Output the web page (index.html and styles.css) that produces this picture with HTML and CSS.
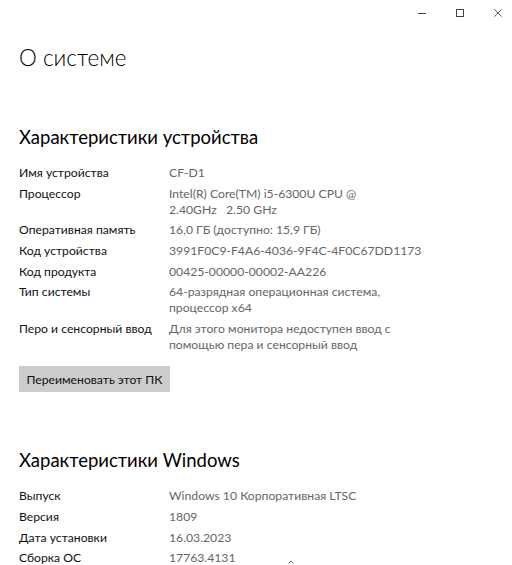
FILE: index.html
```html
<!DOCTYPE html>
<html>
<head>
    <title>О системе</title>
    <link rel="stylesheet" href="styles.css">
</head>
<body>
    <div class="window">
        <div class="titlebar">
            <button class="caption-btn" title="Свернуть">
                <svg width="8" height="8" viewBox="0 0 8 8"><path d="M0 4.5h8" stroke="#444" stroke-width="1"/></svg>
            </button>
            <button class="caption-btn" title="Развернуть">
                <svg width="8" height="8" viewBox="0 0 8 8"><rect x="0.5" y="0.5" width="7" height="7" fill="none" stroke="#444" stroke-width="1"/></svg>
            </button>
            <button class="caption-btn" title="Закрыть">
                <svg width="8" height="8" viewBox="0 0 8 8"><path d="M0.3 0.3l7.4 7.4M7.7 0.3l-7.4 7.4" stroke="#444" stroke-width="0.9"/></svg>
            </button>
        </div>

        <main class="content">
            <h1>О системе</h1>

            <section class="block">
                <h2>Характеристики устройства</h2>
                <div class="specs">
                    <div class="label">Имя устройства</div>
                    <div class="value">CF-D1</div>
                    <div class="label">Процессор</div>
                    <div class="value">Intel(R) Core(TM) i5-6300U CPU @ 2.40GHz&nbsp;&nbsp; 2.50 GHz</div>
                    <div class="label">Оперативная память</div>
                    <div class="value">16,0 ГБ (доступно: 15,9 ГБ)</div>
                    <div class="label">Код устройства</div>
                    <div class="value nowrap">3991F0C9-F4A6-4036-9F4C-4F0C67DD1173</div>
                    <div class="label">Код продукта</div>
                    <div class="value nowrap">00425-00000-00002-AA226</div>
                    <div class="label">Тип системы</div>
                    <div class="value">64-разрядная операционная система, процессор x64</div>
                    <div class="label">Перо и сенсорный ввод</div>
                    <div class="value">Для этого монитора недоступен ввод с помощью пера и сенсорный ввод</div>
                </div>
                <button class="rename-btn">Переименовать этот ПК</button>
            </section>

            <section class="block block-windows">
                <h2>Характеристики Windows</h2>
                <div class="specs">
                    <div class="label">Выпуск</div>
                    <div class="value">Windows 10 Корпоративная LTSC</div>
                    <div class="label">Версия</div>
                    <div class="value">1809</div>
                    <div class="label">Дата установки</div>
                    <div class="value">16.03.2023</div>
                    <div class="label">Сборка ОС</div>
                    <div class="value">17763.4131</div>
                </div>
            </section>
        </main>

        <svg class="scroll-hint" width="6" height="4" viewBox="0 0 6 4"><path d="M0.5 3.5L3 1l2.5 2.5" fill="none" stroke="#777" stroke-width="1"/></svg>
    </div>
</body>
</html>
```

FILE: styles.css
```css
body {
    margin: 0;
    padding: 0;
    background-color: #fff;
    font-family: 'Lato', 'Liberation Sans', sans-serif;
    color: #000;
    overflow: hidden;
}

.window {
    position: relative;
    width: 512px;
    height: 565px;
    overflow: hidden;
}

.titlebar {
    display: flex;
    justify-content: flex-end;
    gap: 10px;
    height: 26px;
}

.caption-btn {
    width: 28px;
    height: 25px;
    padding: 0;
    border: none;
    background: none;
    display: flex;
    align-items: center;
    justify-content: center;
}

.content {
    padding: 0 19px;
}

h1 {
    margin: 17px 0 0;
    font-size: 22.5px;
    font-weight: 300;
    line-height: 30px;
}

h2 {
    margin: 0 0 16px;
    font-size: 18.5px;
    font-weight: 400;
    line-height: 24px;
}

.block {
    margin-top: 52px;
}

.block-windows {
    margin-top: 56px;
}

.specs {
    display: grid;
    grid-template-columns: 150px 222px;
    row-gap: 4.7px;
    font-size: 12.2px;
    line-height: 16px;
}

.label {
    color: #111;
}

.value {
    color: #666;
}

.nowrap {
    white-space: nowrap;
}

.rename-btn {
    display: block;
    margin-top: 13px;
    width: 151px;
    height: 26px;
    border: none;
    background-color: #ccc;
    font-family: inherit;
    font-size: 12.2px;
    color: #111;
    padding: 0;
}

.scroll-hint {
    position: absolute;
    left: 288px;
    top: 560px;
}
```
